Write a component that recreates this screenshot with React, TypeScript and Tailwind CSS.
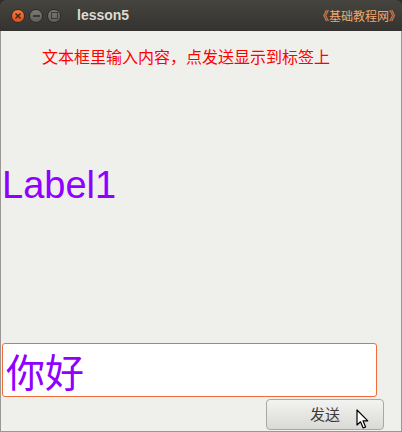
import React from "react";

function TitleButton({ kind }: { kind: "close" | "min" | "max" }) {
  if (kind === "close") {
    return (
      <div className="w-[14px] h-[14px] rounded-full bg-gradient-to-b from-[#f5793f] to-[#dc4f1f] border border-[#3a2a20] flex items-center justify-center">
        <svg width="8" height="8" viewBox="0 0 8 8">
          <path d="M1.5 1.5 L6.5 6.5 M6.5 1.5 L1.5 6.5" stroke="#3b2418" strokeWidth="1.4" />
        </svg>
      </div>
    );
  }
  return (
    <div className="w-[14px] h-[14px] rounded-full bg-gradient-to-b from-[#7b7a75] to-[#5e5d59] border border-[#2c2b28] flex items-center justify-center">
      {kind === "min" ? (
        <div className="w-[7px] h-[2px] bg-[#3a3936]" />
      ) : (
        <div className="w-[7px] h-[7px] border border-[#3a3936]" />
      )}
    </div>
  );
}

function Cursor() {
  return (
    <svg width="14" height="21" viewBox="0 0 14 21" className="absolute left-[89px] top-[9px]">
      <path
        d="M1 1 L1 16 L4.5 12.8 L7.2 19 L9.6 18 L7 11.8 L11.8 11.8 Z"
        fill="#ffffff"
        stroke="#000000"
        strokeWidth="1.2"
        strokeLinejoin="round"
      />
    </svg>
  );
}

export default function App() {
  return (
    <div className="w-[402px] h-[432px] flex flex-col overflow-hidden bg-[#2e2d29]">
      {/* title bar */}
      <div className="h-[31px] flex items-center rounded-t-[6px] bg-gradient-to-b from-[#45443f] to-[#34332f] pl-[11px] pr-[1px]">
        <div className="flex items-center gap-[4px]">
          <TitleButton kind="close" />
          <TitleButton kind="min" />
          <TitleButton kind="max" />
        </div>
        <span className="ml-[16px] text-[14px] font-bold text-[#dfdbd2] font-['Liberation_Sans',sans-serif]">
          lesson5
        </span>
        <span className="ml-auto text-[12px] text-[#f5a66b] font-['Noto_Sans_CJK_SC',sans-serif]">
          《基础教程网》
        </span>
      </div>

      {/* body */}
      <div className="flex-1 flex flex-col bg-[#efefec] border-l border-r border-b border-[#9a9894]">
        <div className="pl-[41px] pt-[17px] text-[16px] leading-[16px] text-[#ff0000] font-['Noto_Sans_CJK_SC',sans-serif]">
          文本框里输入内容，点发送显示到标签上
        </div>

        <div className="mt-[101px] pl-[1px] text-[38px] leading-[40px] text-[#8f00ff] font-['Liberation_Sans',sans-serif]">
          Label1
        </div>

        <div className="mt-auto ml-[1px] w-[375px] h-[54px] bg-white border border-[#ef6d3a] rounded-[3px] flex items-center pl-[3px]">
          <span className="text-[39px] leading-none text-[#8f00ff] font-['Noto_Sans_CJK_SC',sans-serif]">
            你好
          </span>
        </div>

        <div className="mt-[2px] mb-[1px] ml-[265px] relative w-[118px] h-[31px] rounded-[4px] border border-[#a9a8a4] bg-gradient-to-b from-[#f3f3f1] to-[#d9d9d5] flex items-center justify-center">
          <span className="text-[15px] text-[#3c3c3c] font-['Noto_Sans_CJK_SC',sans-serif]">发送</span>
          <Cursor />
        </div>
      </div>
    </div>
  );
}
